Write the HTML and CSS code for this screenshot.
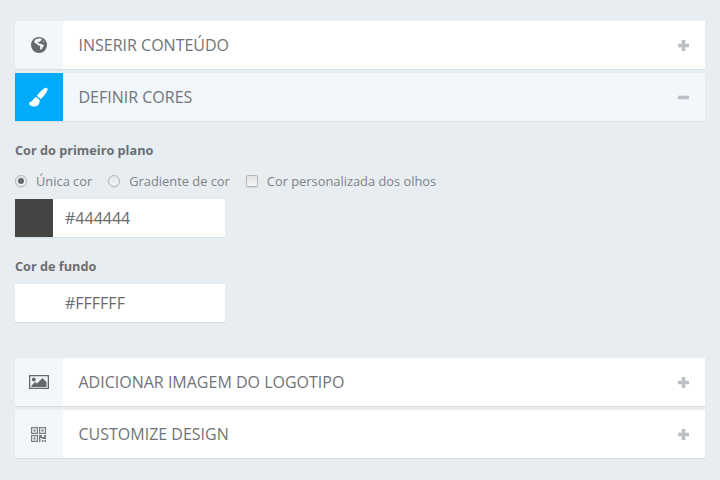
FILE: index.html
```html
<!DOCTYPE html>
<html lang="pt">
  <head>
    <meta charset="UTF-8" />
    <title>Personalizar QR</title>
    <link rel="stylesheet" href="styles.css">
  </head>
  <body>
    <div class="panel">
      <div class="panel-head">
        <div class="panel-icon">
          <svg width="18" height="18" viewBox="0 0 18 18"><path fill-rule="evenodd" d="M9 1a8 8 0 1 1 0 16A8 8 0 0 1 9 1zM5.200 3.400 4.300 5.500l.7 1.800 1.600.4 1.400 1.500 1.800.6.600 1.200-.5 1.600.9 1.200 1.200-1 .9-1.800 1.200-1.200-.9-1-1.600-.6-1.400-.8-1.700.2-.5-1.200.9-.9.9.5.4-1 1.300-.6.2-1.400-1.600-.8-1.700.2-1.100.5zM13.500 5l-.9.7.8.7.7-.6z"/></svg>
        </div>
        <span class="panel-title">INSERIR CONTEÚDO</span>
        <span class="panel-toggle">
          <svg width="11" height="11" viewBox="0 0 11 11"><path d="M3.700 0h3.600v3.700H11v3.600H7.300V11H3.700V7.300H0V3.700h3.700z"/></svg>
        </span>
      </div>
    </div>

    <div class="panel active">
      <div class="panel-head">
        <div class="panel-icon">
          <svg width="20" height="20" viewBox="0 0 20 20"><path d="M16.500.8C18 .4 19 1.400 18.500 3 17.500 6 14 10.500 11.500 12L8 9c1.500-2.500 5.500-7 8.500-8.200zM7 10l3.500 3c.5 3-1 6-4.500 6.500-2.500.3-4.500-.5-5.700-2-.3-1.500.2-3 1.500-2.800 1.700.3 2.200-3.200 5.200-4.700z"/></svg>
        </div>
        <span class="panel-title">DEFINIR CORES</span>
        <span class="panel-toggle">
          <svg width="11" height="11" viewBox="0 0 11 11"><path d="M0 3.700h11v3.600H0z"/></svg>
        </span>
      </div>

      <div class="panel-body">
        <div class="field-label">Cor do primeiro plano</div>
        <div class="options">
          <label class="option"><span class="radio checked"></span>Única cor</label>
          <label class="option"><span class="radio"></span>Gradiente de cor</label>
          <label class="option"><span class="checkbox"></span>Cor personalizada dos olhos</label>
        </div>
        <div class="color-input">
          <span class="swatch dark"></span>
          <span class="color-value">#444444</span>
        </div>

        <div class="field-label second">Cor de fundo</div>
        <div class="color-input">
          <span class="swatch"></span>
          <span class="color-value">#FFFFFF</span>
        </div>
      </div>
    </div>

    <div class="panel">
      <div class="panel-head">
        <div class="panel-icon">
          <svg width="20" height="16" viewBox="0 0 20 16"><path fill-rule="evenodd" d="M0 1h20v14H0zM1.300 2.300v11.400h17.400V2.300zM2.500 13v-1.500l3.500-3.500 2 1.500 5.500-5.500L17.500 8v5zM4.800 3.500a2 2 0 1 1 0 4 2 2 0 0 1 0-4z"/></svg>
        </div>
        <span class="panel-title">ADICIONAR IMAGEM DO LOGOTIPO</span>
        <span class="panel-toggle">
          <svg width="11" height="11" viewBox="0 0 11 11"><path d="M3.700 0h3.600v3.700H11v3.600H7.300V11H3.700V7.300H0V3.700h3.700z"/></svg>
        </span>
      </div>
    </div>

    <div class="panel">
      <div class="panel-head">
        <div class="panel-icon">
          <svg class="qr-icon" width="16" height="15" viewBox="0 0 16 15"><path fill-rule="evenodd" d="M0 0h7v7H0zM1.200 1.200v4.600h4.600V1.200zM2.500 2.500h2v2h-2zM8 0h7v7H8zM9.200 1.200v4.600h4.600V1.200zM10.500 2.500h2v2h-2zM0 8h7v7H0zM1.200 9.200v4.600h4.600V9.200zM2.500 10.500h2v2h-2zM8 8h3v2h2V8h2v4h-4v-1H9.500v4H8zM11 13h1.500v2H11zM13.500 13H15v2h-1.500z"/></svg>
        </div>
        <span class="panel-title">CUSTOMIZE DESIGN</span>
        <span class="panel-toggle">
          <svg width="11" height="11" viewBox="0 0 11 11"><path d="M3.700 0h3.600v3.700H11v3.600H7.300V11H3.700V7.300H0V3.700h3.700z"/></svg>
        </span>
      </div>
    </div>
  </body>
</html>
```

FILE: styles.css
```css
body {
  margin: 0;
  padding: 21px 15px 0;
  height: 480px;
  box-sizing: border-box;
  overflow: hidden;
  background-color: #e8edf1;
  font-family: "Open Sans", sans-serif;
  color: #6a6f74;
}
.panel {
  margin-bottom: 4px;
}
.panel-head {
  display: flex;
  align-items: center;
  height: 48px;
  background-color: white;
  box-shadow: 0 1px 1px rgba(0, 0, 0, 0.06);
}
.panel-icon {
  display: flex;
  align-items: center;
  justify-content: center;
  width: 48px;
  height: 48px;
  background-color: #f2f7fb;
}
.panel-icon svg {
  fill: #64696e;
}
.panel-icon .qr-icon {
  opacity: 0.85;
}
.panel-title {
  flex: 1;
  margin-left: 15.5px;
  font-size: 16px;
  color: #6f7479;
}
.panel-toggle {
  display: flex;
  margin-right: 16px;
}
.panel-toggle svg {
  fill: #bcc0c6;
}
.active .panel-head {
  background-color: #f2f7fb;
}
.active .panel-icon {
  background-color: #00abfb;
}
.active .panel-icon svg {
  fill: white;
}
.panel-body {
  padding: 20px 0 32px;
}
.field-label {
  height: 18px;
  line-height: 18px;
  font-size: 12.7px;
  font-weight: 700;
  color: #6a6f74;
}
.field-label.second {
  margin-top: 20px;
  margin-bottom: 9px;
}
.options {
  display: flex;
  align-items: center;
  height: 18px;
  margin-top: 13px;
  margin-bottom: 9px;
}
.option {
  display: flex;
  align-items: center;
  margin-right: 16px;
  font-size: 12.85px;
  color: #7d8287;
}
.radio {
  width: 10px;
  height: 10px;
  margin-right: 9px;
  border: 1px solid #b4b7ba;
  border-radius: 50%;
  background: linear-gradient(#e2e4e6, #f4f5f6);
  box-shadow: 0 1px 1px rgba(0, 0, 0, 0.08);
  position: relative;
}
.radio.checked::after {
  content: "";
  position: absolute;
  left: 2px;
  top: 2px;
  width: 6px;
  height: 6px;
  border-radius: 50%;
  background-color: #63686d;
}
.checkbox {
  width: 10px;
  height: 10px;
  margin-right: 9px;
  border: 1px solid #b4b7ba;
  border-radius: 2px;
  background: linear-gradient(#e2e4e6, #f4f5f6);
  box-shadow: 0 1px 1px rgba(0, 0, 0, 0.08);
}
.color-input {
  display: flex;
  align-items: center;
  width: 210px;
  height: 38px;
  background-color: white;
  box-shadow: 0 1px 1px rgba(0, 0, 0, 0.06);
}
.swatch {
  width: 38px;
  height: 38px;
  background-color: white;
}
.swatch.dark {
  background-color: #444444;
}
.color-value {
  margin-left: 12px;
  font-size: 16px;
  color: #666b70;
}
```
